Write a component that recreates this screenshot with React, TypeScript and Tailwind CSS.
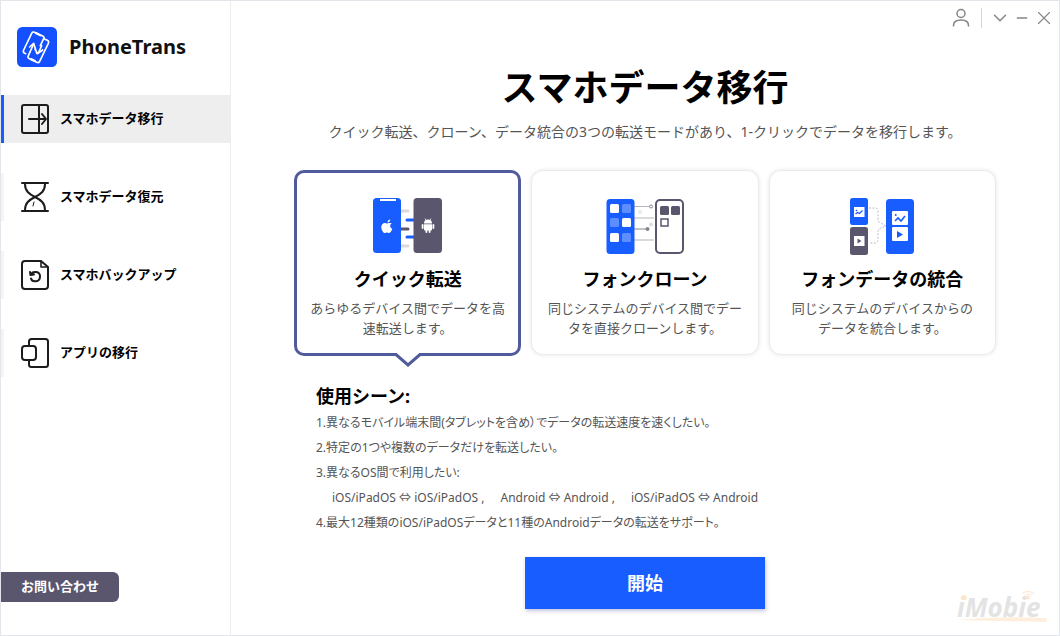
import React, { useState } from 'react';
import { ChevronDown, Minus, X } from 'lucide-react';

interface NavItem {
  label: string;
  icon: React.ReactNode;
}

interface Mode {
  title: string;
  lines: string[];
  art: React.ReactNode;
}

function Logo() {
  return (
    <svg viewBox="0 0 120 120" className="w-10 h-10" fill="none" stroke="#fff" strokeWidth="5" strokeLinecap="round" strokeLinejoin="round" aria-hidden="true">
      <rect width="120" height="120" rx="16" fill="#1450ff" stroke="none" />
      <path d="M26 80l-4-2q-5-3-2-9L44 19q3-6 9-3l24 11q6 3 4 9" />
      <path d="M80 35l11 5q6 3 3 9L68 103q-3 6-9 3L37 95q-6-3-3-9l5-11" />
      <path d="M80 35L70 56M39 75l9-20" />
      <path d="M38 60l12-11 9 29q2 3 5 0l10-22M54 67l8 13 15-11" />
      <path d="M56 18l14 7M42 96l12 6" strokeWidth="6" />
    </svg>
  );
}

function TransferIcon() {
  return (
    <svg viewBox="0 0 30 32" className="w-[30px] h-8" fill="none" stroke="#1c1c1c" strokeWidth="2" strokeLinecap="round" strokeLinejoin="round" aria-hidden="true">
      <rect x="2" y="2" width="26" height="28" rx="2" />
      <path d="M19 2v28" />
      <path d="M9 16h16M22 11l4 5-4 5" />
    </svg>
  );
}

function RestoreIcon() {
  return (
    <svg viewBox="0 0 30 32" className="w-[30px] h-8" fill="none" stroke="#1c1c1c" strokeWidth="2" strokeLinecap="round" aria-hidden="true">
      <path d="M2 2h26M2 30h26" />
      <path d="M5 3c0 7 4 10 10 13 6-3 10-6 10-13M5 29c0-7 4-10 10-13 6 3 10 6 10 13" />
      <path d="M14 21l-1 4" strokeWidth="1" />
    </svg>
  );
}

function BackupIcon() {
  return (
    <svg viewBox="0 0 30 32" className="w-[30px] h-8" fill="none" stroke="#1c1c1c" strokeWidth="2" strokeLinecap="round" strokeLinejoin="round" aria-hidden="true">
      <path d="M21 2H5a3 3 0 0 0-3 3v22a3 3 0 0 0 3 3h20a3 3 0 0 0 3-3V8z" />
      <path d="M21 3v5h6" strokeWidth="1.6" />
      <path d="M11 15c2-3 9-3 9 2.500 0 6-8 6-9 2M10 13l.5 3 3.500-.5" />
    </svg>
  );
}

function AppsIcon() {
  return (
    <svg viewBox="0 0 30 32" className="w-[30px] h-8" fill="none" stroke="#1c1c1c" strokeWidth="2" aria-hidden="true">
      <path d="M9 9V4.500a2.500 2.500 0 0 1 2.500-2.500h14A2.500 2.500 0 0 1 28 4.500v23a2.500 2.500 0 0 1-2.500 2.500h-14A2.500 2.500 0 0 1 9 27.500V23" />
      <rect x="2" y="9" width="14" height="14" rx="3" />
    </svg>
  );
}

function QuickArt() {
  return (
    <svg viewBox="0 0 70 56" className="w-[70px] h-14" aria-hidden="true">
      <g strokeWidth="3" strokeLinecap="round">
        <path d="M28 13h7M28 48h7" stroke="#d9d9de" />
        <path d="M34 22h8M34 39h8" stroke="#175dff" />
        <path d="M28 31h7" stroke="#59566e" />
      </g>
      <rect width="28" height="55" rx="3.500" fill="#175dff" />
      <rect x="7" y="1" width="16" height="2" fill="#fff" />
      <rect x="40.500" width="28.500" height="55" rx="3.500" fill="#59566e" />
      <path fill="#fff" d="M17.200 21.500c.2 1.500-1.200 3-2.700 3-.1-1.500 1.200-2.900 2.700-3zM18.800 25.300c-1 .6-1.600 1.500-1.600 2.600 0 1.400.9 2.300 2.100 2.800-.6 2-2 4.300-3.500 4.300-.8 0-1.100-.5-2-.5s-1.300.5-2 .5c-1.700 0-3.500-3.300-3.500-5.800 0-2.700 1.600-4.300 3.400-4.300.9 0 1.600.6 2.300.6.6 0 1.300-.6 2.400-.6.900 0 1.800.1 2.400.4z" />
      <g fill="#fff">
        <path d="M51 25.500a4 4 0 0 1 8 0z" />
        <path d="M51 26.200h8v5.300a1 1 0 0 1-1 1h-6a1 1 0 0 1-1-1z" />
        <rect x="48.700" y="26" width="1.800" height="5" rx=".9" />
        <rect x="59.500" y="26" width="1.800" height="5" rx=".9" />
        <rect x="52.500" y="31" width="1.800" height="4" rx=".9" />
        <rect x="55.700" y="31" width="1.800" height="4" rx=".9" />
        <path d="M52 20.500l1 2M58 20.500l-1 2" stroke="#fff" strokeWidth=".7" />
      </g>
    </svg>
  );
}

function CloneArt() {
  return (
    <svg viewBox="0 0 78 56" className="w-[78px] h-14" fill="none" aria-hidden="true">
      <g stroke="#b5b5bd">
        <path d="M28 8.500h15M28 20h20M28 42h20" />
        <circle cx="45" cy="8.500" r="1.500" stroke="#85858f" />
        <circle cx="34" cy="14" r="1.500" stroke="#dedee2" />
      </g>
      <path d="M28 31h13" stroke="#85858f" />
      <circle cx="41.500" cy="31" r="2" fill="#85858f" />
      <circle cx="45" cy="26.500" r="2" fill="#dedee2" />
      <rect x=".5" y="1" width="28" height="55" rx="3.500" fill="#175dff" />
      <g fill="#fff">
        <rect x="4" y="6" width="9" height="9" rx="1.500" />
        <rect x="16" y="20" width="9" height="9" rx="1.500" />
        <rect x="4" y="35" width="9" height="9" rx="1.500" />
      </g>
      <g fill="#fff" fillOpacity=".3">
        <rect x="16" y="6" width="9" height="9" rx="1.500" />
        <rect x="4" y="20" width="9" height="9" rx="1.500" />
        <rect x="16" y="35" width="9" height="9" rx="1.500" />
      </g>
      <rect x="50" y="2" width="27" height="53" rx="4" fill="#fff" stroke="#59566e" strokeWidth="2" />
      <rect x="54" y="8" width="9" height="9" rx="1.500" fill="#59566e" />
      <rect x="65" y="8" width="9" height="9" rx="1.500" fill="#59566e" />
      <rect x="55" y="21" width="7" height="7" stroke="#59566e" strokeWidth="1.500" />
    </svg>
  );
}

function MergeArt() {
  return (
    <svg viewBox="0 0 64 57" className="w-16 h-[57px] -mb-px" fill="none" aria-hidden="true">
      <rect width="18" height="27" rx="2.500" fill="#175dff" />
      <rect x="4" y="9" width="10.500" height="10" fill="#fff" />
      <path d="M5.500 16l2-1.500 2 1 3-3M6 12l1 1" stroke="#175dff" strokeWidth="1.200" />
      <rect y="29" width="18" height="28" rx="2.500" fill="#59566e" />
      <rect x="4" y="38" width="10.500" height="10" fill="#fff" />
      <path d="M7.500 40.500v5l4-2.500z" fill="#59566e" />
      <path d="M19 10h6q3 0 3 3v9q0 2 3 3l5 3-5 2q-3 1-3 4v7q0 4-3 4h-6" stroke="#b9b9bf" strokeDasharray="2 1.500" />
      <rect x="36" y="1" width="28" height="55" rx="3.500" fill="#175dff" />
      <rect x="42" y="13" width="16" height="14" rx="1" fill="#fff" />
      <path d="M45 23l3-3 3 3 4-5M45 16.500l1.500 1" stroke="#175dff" strokeWidth="1.600" />
      <rect x="42" y="29" width="16" height="14" rx="1" fill="#fff" />
      <path d="M47 33v7l6-3.500z" fill="#175dff" />
    </svg>
  );
}

const navItems: NavItem[] = [
  { label: 'スマホデータ移行', icon: <TransferIcon /> },
  { label: 'スマホデータ復元', icon: <RestoreIcon /> },
  { label: 'スマホバックアップ', icon: <BackupIcon /> },
  { label: 'アプリの移行', icon: <AppsIcon /> },
];

const modes: Mode[] = [
  { title: 'クイック転送', lines: ['あらゆるデバイス間でデータを高', '速転送します。'], art: <QuickArt /> },
  { title: 'フォンクローン', lines: ['同じシステムのデバイス間でデー', 'タを直接クローンします。'], art: <CloneArt /> },
  { title: 'フォンデータの統合', lines: ['同じシステムのデバイスからの', 'データを統合します。'], art: <MergeArt /> },
];

function Sidebar() {
  const [active, setActive] = useState(0);

  return (
    <aside className="w-[230px] shrink-0 flex flex-col border-r border-[#ededf0]">
      <div className="flex items-center gap-3 pl-4 pt-[26px]">
        <Logo />
        <span className="text-[20px] leading-10 font-bold text-[#111]">PhoneTrans</span>
      </div>

      <nav className="mt-7 flex flex-col gap-[30px]">
        {navItems.map((item, i) => (
          <button
            key={item.label}
            onClick={() => setActive(i)}
            className={`h-12 flex items-center gap-[10px] border-l-3 pl-4 text-[13px] font-bold text-black ${
              i === active ? 'border-[#175dff] bg-[#eee]' : 'border-[#f4f4f4]'
            }`}
          >
            {item.icon}
            {item.label}
          </button>
        ))}
      </nav>

      <button className="mt-auto mb-[33px] self-start h-[30px] px-5 rounded-r-md bg-[#59566e] text-[13px] font-bold text-white">
        お問い合わせ
      </button>
    </aside>
  );
}

function WindowControls() {
  return (
    <div className="flex items-center justify-end gap-[3px] pr-1 pt-1.5 h-7 text-[#858585]">
      <button aria-label="アカウント" className="mr-2">
        <svg viewBox="0 0 18 20" className="w-[18px] h-5" fill="none" stroke="currentColor" strokeWidth="1.500" aria-hidden="true">
          <circle cx="9" cy="5.500" r="4" />
          <path d="M1.500 18.500v-1c0-3.500 3-5.500 7.500-5.500s7.500 2 7.500 5.500v1" />
        </svg>
      </button>
      <span className="w-px h-5 bg-[#d5d5d5]" />
      <button aria-label="メニュー" className="ml-1"><ChevronDown className="w-[22px] h-[22px]" strokeWidth={1.6} /></button>
      <button aria-label="最小化"><Minus className="w-4 h-4" strokeWidth={2} /></button>
      <button aria-label="閉じる"><X className="w-[22px] h-[22px]" strokeWidth={1.2} /></button>
    </div>
  );
}

function ModeCard({ mode, selected, onSelect }: { mode: Mode; selected: boolean; onSelect: () => void }) {
  return (
    <button
      onClick={onSelect}
      aria-pressed={selected}
      className={`relative flex flex-col items-center bg-white px-2 text-center ${
        selected
          ? 'rounded-[10px] border-[3px] border-[#505b9c] pt-[25px] pb-[15px]'
          : 'rounded-xl border border-[#ebebeb] pt-[27px] pb-4 shadow-[0_0_4px_rgba(0,0,0,0.1)]'
      }`}
    >
      {mode.art}
      <span className="mt-[13px] text-[18px] leading-6 font-bold text-black">{mode.title}</span>
      <span className="mt-[7px] text-[13px] leading-5 text-[#555] whitespace-nowrap">
        {mode.lines.map((line) => (
          <span key={line} className="block">{line}</span>
        ))}
      </span>
      {selected && (
        <svg viewBox="0 0 28 16" className="absolute top-full left-1/2 -translate-x-1/2 w-7 h-4" aria-hidden="true">
          <path d="M2 0L14 11 26 0z" fill="#fff" />
          <path d="M0 1.500h2L14 12 26 1.500h2" fill="none" stroke="#505b9c" strokeWidth="3" />
          <path d="M4 0L14 9.500 24 0z" fill="#fff" />
        </svg>
      )}
    </button>
  );
}

function Watermark() {
  return (
    <div className="absolute right-3 bottom-3 h-8 w-[92px] pointer-events-none">
      <span className="block pl-0.5 font-['Open_Sans'] text-[26px] leading-8 font-bold italic text-[#e3e3e3]">iMobie</span>
      <svg viewBox="0 0 92 32" className="absolute inset-0 w-full h-full" aria-hidden="true">
        <path d="M0 29q45-4 90-2a2 2 0 0 1 0 4q-45-1-90-2z" fill="#ffeedd" />
        <circle cx="9" cy="6.500" r="2.500" fill="#ffe3cb" />
        <circle cx="73" cy="6.500" r="2" fill="#ffe3cb" />
        <g fill="none" stroke="#ffe8d4" strokeWidth="1.200">
          <path d="M67 2.500q6-4 12 0M69.500 4.500q4-3 7.500 0" />
        </g>
      </svg>
    </div>
  );
}

export default function App() {
  const [mode, setMode] = useState(0);

  return (
    <div className="relative min-h-screen flex bg-white border border-[#e2e6ea] font-['Noto_Sans','Noto_Sans_CJK_JP',sans-serif]" lang="ja">
      <Sidebar />

      <main className="flex-1 flex flex-col">
        <WindowControls />

        <div className="w-full max-w-[702px] mx-auto flex flex-col">
          <h1 className="mt-[35px] text-4xl leading-[48px] font-bold text-center text-black">スマホデータ移行</h1>
          <p className="mt-[10px] text-sm leading-5 text-center text-[#555]">
            クイック転送、クローン、データ統合の3つの転送モードがあり、1-クリックでデータを移行します。
          </p>

          {/* Transfer modes */}
          <div className="mt-7 grid grid-cols-3 items-start gap-[10px]">
            {modes.map((m, i) => (
              <ModeCard key={m.title} mode={m} selected={i === mode} onSelect={() => setMode(i)} />
            ))}
          </div>

          {/* Usage scenes */}
          <section className="mt-7 pl-[22px]">
            <h2 className="text-[18px] leading-6 font-bold text-black">使用シーン:</h2>
            <ul className="mt-[2px] text-xs leading-[25px] text-[#555] [font-feature-settings:'palt']">
              <li>1.異なるモバイル端末間(タブレットを含め）でデータの転送速度を速くしたい。</li>
              <li>2.特定の1つや複数のデータだけを転送したい。</li>
              <li>3.異なるOS間で利用したい:</li>
              <li className="pl-4 flex gap-4">
                <span>iOS/iPadOS ⇔ iOS/iPadOS ,</span>
                <span>Android ⇔ Android ,</span>
                <span>iOS/iPadOS ⇔ Android</span>
              </li>
              <li>4.最大12種類のiOS/iPadOSデータと11種のAndroidデータの転送をサポート。</li>
            </ul>
          </section>

          <button className="mt-[22px] self-center w-60 h-[52px] bg-[#175dff] text-[18px] font-bold text-white shadow-[1px_2px_4px_rgba(60,60,140,0.3)]">
            開始
          </button>
        </div>
      </main>

      <Watermark />
    </div>
  );
}
